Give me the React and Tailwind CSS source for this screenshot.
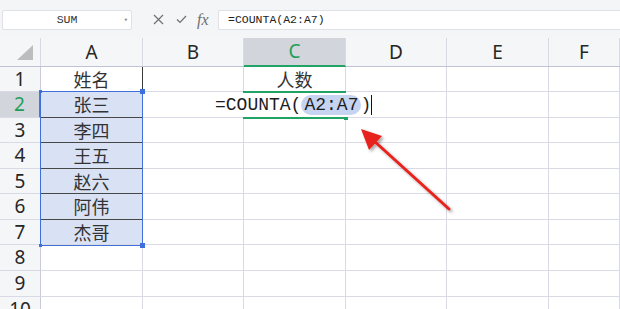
import React from "react";

const cols = [
  { key: "A", w: "w-[102px]" },
  { key: "B", w: "w-[101px]" },
  { key: "C", w: "w-[102px]" },
  { key: "D", w: "w-[101px]" },
  { key: "E", w: "w-[102px]" },
  { key: "F", w: "flex-1" },
];

const rowHeights = [
  "h-[25px]",
  "h-[26px]",
  "h-[25px]",
  "h-[26px]",
  "h-[25px]",
  "h-[26px]",
  "h-[25px]",
  "h-[26px]",
  "h-[26px]",
  "h-[25px]",
];

const data = {
  1: { A: "姓名", C: "人数" },
  2: { A: "张三" },
  3: { A: "李四" },
  4: { A: "王五" },
  5: { A: "赵六" },
  6: { A: "阿伟" },
  7: { A: "杰哥" },
};

const cellClass = (row, col) => {
  let c = "border-r border-b border-[#dadae6]";
  if (col === "A" && row === 1) c = "border-r border-b border-r-[#3a3a3a] border-b-[#dadae6]";
  if (col === "A" && row >= 2 && row <= 6) c = "border-r border-b border-r-[#dadae6] border-b-[#474747]";
  if (col === "A" && row >= 2 && row <= 7) c += " bg-[#d9e1f4]";
  return c;
};

const App = () => {
  return (
    <div className="relative w-[620px] h-[309px] overflow-hidden bg-white font-['Noto_Sans','Noto_Sans_CJK_SC',sans-serif] text-[#262626]">
      {/* toolbar */}
      <div className="h-[38px] bg-[#f4f5f7] flex items-center pl-[2px] pt-[1px]">
        <div className="relative w-[130px] h-[20px] bg-white border border-[#e1e2e6] rounded-[2px] flex items-center justify-center font-['Liberation_Mono',monospace] text-[11.5px] text-[#333]">
          SUM
          <span className="absolute right-[3px] top-[4px] text-[7px] text-[#888]">▾</span>
        </div>
        <div className="w-[86px] flex items-center text-[#6f6f6f]">
          <svg className="ml-[21px]" width="11" height="11" viewBox="0 0 11 11">
            <path d="M1 1 L10 10 M10 1 L1 10" stroke="#707070" strokeWidth="1.2" fill="none" />
          </svg>
          <svg className="ml-[12px]" width="11" height="9" viewBox="0 0 11 9">
            <path d="M1 4.5 L4 7.5 L10 1" stroke="#707070" strokeWidth="1.2" fill="none" />
          </svg>
          <span className="ml-[10px] font-['Liberation_Serif',serif] italic text-[16px] leading-none">fx</span>
        </div>
        <div className="flex-1 h-[20px] bg-white border border-[#e1e2e6] border-r-0 rounded-l-[2px] flex items-center pl-[9px] font-['Liberation_Mono',monospace] text-[11.5px] text-[#222]">
          =COUNTA(A2:A7)
        </div>
      </div>

      {/* header row */}
      <div className="flex h-[29px] bg-[#f5f6f8] border-b border-[#bfc2d2]">
        <div className="w-[41px] border-r border-[#d8d9e3] flex items-end justify-end pr-[7px] pb-[6px]">
          <div className="w-0 h-0 border-l-[16px] border-l-transparent border-b-[15px] border-b-[#bdbdbd]" />
        </div>
        {cols.map((c) => (
          <div
            key={c.key}
            className={`${c.w} flex items-center justify-center text-[19px] ${
              c.key === "C"
                ? "bg-[#d2d5db] text-[#1e9e5a] border-b-2 border-[#21a366] -mb-[1px] border-r border-r-[#d8d9e3]"
                : "border-r border-[#d8d9e3]"
            }`}
          >
            {c.key}
          </div>
        ))}
      </div>

      {/* rows */}
      {rowHeights.map((h, i) => {
        const row = i + 1;
        return (
          <div key={row} className={`flex ${h}`}>
            <div
              className={`w-[41px] flex items-center justify-center text-[19px] border-b border-[#dadae6] ${
                row === 2
                  ? "bg-[#d2d5db] text-[#1e9e5a] border-r-2 border-r-[#21a366]"
                  : "bg-[#f5f6f8] border-r border-r-[#c9cbd8]"
              }`}
            >
              {row}
            </div>
            {cols.map((c) => (
              <div
                key={c.key}
                className={`${c.w} ${cellClass(row, c.key)} flex items-center justify-center font-['Noto_Sans_CJK_SC',sans-serif] text-[18px] text-[#333]`}
              >
                {data[row] && data[row][c.key]}
              </div>
            ))}
          </div>
        );
      })}

      {/* selection A2:A7 */}
      <div className="absolute left-[40px] top-[91px] w-[103px] h-[155px] border-[1.5px] border-[#3f6fdb] pointer-events-none">
        <div className="absolute -left-[2px] -top-[2px] w-[3px] h-[3px] bg-[#3f6fdb]" />
        <div className="absolute -right-[3px] -top-[3px] w-[5px] h-[5px] bg-[#3f6fdb]" />
        <div className="absolute -left-[2px] -bottom-[2px] w-[3px] h-[3px] bg-[#3f6fdb]" />
        <div className="absolute -right-[3px] -bottom-[3px] w-[5px] h-[5px] bg-[#3f6fdb]" />
      </div>

      {/* active cell C2 */}
      <div className="absolute left-[243px] top-[91px] w-[103px] h-[28px] border-y-2 border-[#21a366]">
        <div className="absolute -right-[2px] -bottom-[3px] w-[4px] h-[4px] bg-[#21a366]" />
      </div>

      {/* in-cell edit box */}
      <div className="absolute left-[212px] top-[93px] w-[164px] h-[24px] bg-white flex items-center pl-[3px] font-['Liberation_Mono',monospace] text-[18px] text-[#1c1c1c] whitespace-nowrap">
        <span>=COUNTA(</span>
        <span className="bg-[#c7d4f1] rounded-full px-[3px] leading-[20px]">A2:A7</span>
        <span className="-ml-[1px]">)</span>
        <span className="w-[1px] h-[20px] bg-[#111]" />
      </div>

      {/* red arrow */}
      <svg className="absolute left-0 top-0 pointer-events-none" width="620" height="309" viewBox="0 0 620 309">
        <defs>
          <filter id="sh" x="-20%" y="-20%" width="140%" height="140%">
            <feDropShadow dx="2" dy="2" stdDeviation="1.5" floodColor="#000" floodOpacity="0.35" />
          </filter>
        </defs>
        <g filter="url(#sh)">
          <line x1="449" y1="209" x2="373" y2="140" stroke="#e8231c" strokeWidth="3" strokeLinecap="round" />
          <polygon points="361,129 382,136 369,150" fill="#e8231c" />
        </g>
      </svg>
    </div>
  );
};

export default App;
